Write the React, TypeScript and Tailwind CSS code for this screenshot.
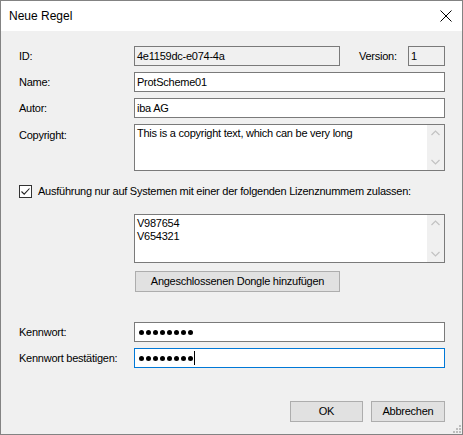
import React from "react";

const font = { fontFamily: '"Liberation Sans", Arial, sans-serif' };

function Label({ children }: { children: React.ReactNode }) {
  return <div className="w-[115px] shrink-0 text-[11px] text-black">{children}</div>;
}

function TextBox({
  value,
  className = "",
}: {
  value: React.ReactNode;
  className?: string;
}) {
  return (
    <div
      className={`h-[20px] border border-[#7a7a7a] bg-white flex items-center px-[2px] text-[11px] text-black ${className}`}
    >
      {value}
    </div>
  );
}

function ScrollArea({ lines, height }: { lines: string[]; height: string }) {
  return (
    <div className={`flex-1 ${height} border border-[#7a7a7a] bg-white flex`}>
      <div className="flex-1 px-[2px] pt-[2px] text-[11px] leading-[13px] text-black">
        {lines.map((l) => (
          <div key={l}>{l}</div>
        ))}
      </div>
      <div className="w-[17px] bg-[#f0f0f0] flex flex-col items-center justify-between py-[5px]">
        <svg width="9" height="6" viewBox="0 0 9 6">
          <path d="M0.5 5 L4.5 1 L8.5 5" fill="none" stroke="#c2c2c2" strokeWidth="1.2" />
        </svg>
        <svg width="9" height="6" viewBox="0 0 9 6">
          <path d="M0.5 1 L4.5 5 L8.5 1" fill="none" stroke="#c2c2c2" strokeWidth="1.2" />
        </svg>
      </div>
    </div>
  );
}

function Dots() {
  return (
    <div className="flex gap-[2px] items-center">
      {Array.from({ length: 8 }).map((_, i) => (
        <span key={i} className="block w-[5px] h-[5px] rounded-full bg-black" />
      ))}
    </div>
  );
}

export default function App() {
  return (
    <div className="w-[463px] h-[435px] border border-[#838383] bg-[#f0f0f0] flex flex-col" style={font}>
      {/* Title bar */}
      <div className="h-[30px] bg-white flex items-center justify-between pl-[8px] pr-[10px]">
        <span className="text-[12px] text-black">Neue Regel</span>
        <svg width="12" height="12" viewBox="0 0 12 12">
          <path d="M0.5 0.5 L11.5 11.5 M11.5 0.5 L0.5 11.5" stroke="#000" strokeWidth="1" />
        </svg>
      </div>

      <div className="flex-1 flex flex-col pl-[18px] pr-[17px] tracking-[-0.25px]">
        <div className="mt-[15px] flex items-center">
          <Label>ID:</Label>
          <TextBox value="4e1159dc-e074-4a" className="w-[206px] !bg-[#f0f0f0]" />
          <span className="ml-[19px] text-[11px] text-black">Version:</span>
          <TextBox value="1" className="ml-auto w-[37px] !bg-[#f0f0f0]" />
        </div>

        <div className="mt-[6px] flex items-center">
          <Label>Name:</Label>
          <TextBox value="ProtScheme01" className="flex-1" />
        </div>

        <div className="mt-[6px] flex items-center">
          <Label>Autor:</Label>
          <TextBox value="iba AG" className="flex-1" />
        </div>

        <div className="mt-[6px] flex items-start">
          <div className="pt-[3px]">
            <Label>Copyright:</Label>
          </div>
          <ScrollArea lines={["This is a copyright text, which can be very long"]} height="h-[47px]" />
        </div>

        {/* License restriction */}
        <div className="mt-[14px] flex items-center h-[13px]">
          <div className="w-[13px] h-[13px] border border-[#333] bg-white flex items-center justify-center">
            <svg width="11" height="11" viewBox="0 0 11 11">
              <path d="M1.5 5.5 L4.2 8.2 L9.5 2.5" fill="none" stroke="#222" strokeWidth="1.1" />
            </svg>
          </div>
          <span className="ml-[6px] text-[11px] text-black">
            Ausführung nur auf Systemen mit einer der folgenden Lizenznummem zulassen:
          </span>
        </div>

        <div className="mt-[16px] flex">
          <div className="w-[115px] shrink-0" />
          <ScrollArea lines={["V987654", "V654321"]} height="h-[49px]" />
        </div>

        <div className="mt-[8px] flex">
          <div className="w-[116px] shrink-0" />
          <button className="w-[205px] h-[21px] border border-[#adadad] bg-[#e1e1e1] text-[11px] text-black">
            Angeschlossenen Dongle hinzufügen
          </button>
        </div>

        <div className="mt-[30px] flex items-center">
          <Label>Kennwort:</Label>
          <TextBox value={<Dots />} className="flex-1 !px-[4px]" />
        </div>

        <div className="mt-[6px] flex items-center">
          <Label>Kennwort bestätigen:</Label>
          <TextBox
            value={
              <>
                <Dots />
                <span className="ml-[1px] w-[1px] h-[14px] bg-black" />
              </>
            }
            className="flex-1 !px-[4px] !border-[#0078d7]"
          />
        </div>

        <div className="mt-[33px] flex justify-end gap-[8px]">
          <button className="w-[73px] h-[21px] border border-[#adadad] bg-[#e1e1e1] text-[11px] text-black">OK</button>
          <button className="w-[74px] h-[21px] border border-[#adadad] bg-[#e1e1e1] text-[11px] text-black">
            Abbrechen
          </button>
        </div>

        {/* Resize grip */}
        <div className="mt-auto -mr-[16px] mb-[1px] flex justify-end">
          <svg width="9" height="9" viewBox="0 0 9 9">
            <rect x="7" y="1" width="2" height="2" fill="#bdbdbd" />
            <rect x="4" y="4" width="2" height="2" fill="#bdbdbd" />
            <rect x="7" y="4" width="2" height="2" fill="#bdbdbd" />
            <rect x="1" y="7" width="2" height="2" fill="#bdbdbd" />
            <rect x="4" y="7" width="2" height="2" fill="#bdbdbd" />
            <rect x="7" y="7" width="2" height="2" fill="#bdbdbd" />
          </svg>
        </div>
      </div>
    </div>
  );
}
